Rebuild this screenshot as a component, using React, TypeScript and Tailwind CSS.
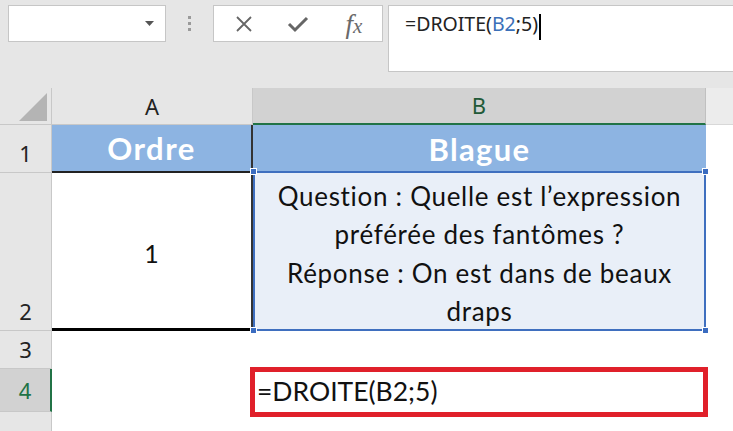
import React from "react";

const ui = { fontFamily: '"Noto Sans", "Open Sans", sans-serif' };
const cell = { fontFamily: 'Lato, "Noto Sans", sans-serif' };

function Handle({ className }: { className: string }) {
  return <div className={`absolute w-[7px] h-[7px] bg-[#3b6cc0] border border-white ${className}`} />;
}

export default function App() {
  return (
    <div className="w-[733px] h-[431px] overflow-hidden bg-white relative" style={ui}>
      {/* Toolbar */}
      <div className="h-[88px] bg-[#e6e6e6] flex items-start pt-[5px]">
        <div className="ml-[8px] w-[158px] h-[37px] bg-white border border-[#c6c6c6] flex items-center justify-end pr-[11px]">
          <svg width="9" height="5" viewBox="0 0 9 5"><path d="M0 0h9L4.5 5z" fill="#555" /></svg>
        </div>
        <div className="w-[47px] h-[37px] flex flex-col items-center justify-center gap-[3px]">
          <div className="w-[3px] h-[3px] bg-[#9a9a9a]" />
          <div className="w-[3px] h-[3px] bg-[#9a9a9a]" />
          <div className="w-[3px] h-[3px] bg-[#9a9a9a]" />
        </div>
        <div className="w-[170px] h-[37px] bg-white border border-[#c6c6c6] flex items-center">
          <div className="w-[56px] flex justify-center pl-[4px]">
            <svg width="18" height="18" viewBox="0 0 18 18"><path d="M2 2L16 16M16 2L2 16" stroke="#666" strokeWidth="1.8" /></svg>
          </div>
          <div className="w-[56px] flex justify-center">
            <svg width="22" height="18" viewBox="0 0 22 18"><path d="M2 9l6 6L20 3" stroke="#666" strokeWidth="3" fill="none" /></svg>
          </div>
          <div className="w-[56px] flex justify-center items-baseline pt-[2px] text-[#6a6a6a] italic" style={{ fontFamily: '"Liberation Serif", serif' }}>
            <span className="text-[27px] leading-none">f</span>
            <span className="text-[21px] leading-none">x</span>
          </div>
        </div>
        <div className="ml-[5px] flex-1 h-[67px] bg-white border border-[#c6c6c6] border-r-0 pl-[16px] pt-[5px]">
          <span className="text-[19.5px] text-[#222] leading-[26px]">
            =DROITE(<span className="text-[#3a6fb8]">B2</span>;5)
          </span>
          <span className="inline-block w-[2px] h-[26px] bg-black align-middle ml-[1px]" />
        </div>
      </div>

      {/* Sheet */}
      <div className="grid grid-cols-[52px_201px_453px_1fr] grid-rows-[37px_48px_158px_38px_43px_1fr] h-[343px]">
        {/* header row */}
        <div className="bg-[#e6e6e6] border-r border-b border-[#c8c8c8] flex items-end justify-end pr-[4px] pb-[3px]">
          <svg width="28" height="28" viewBox="0 0 28 28"><path d="M28 0V28H0z" fill="#b4b4b4" /></svg>
        </div>
        <div className="bg-[#e6e6e6] border-r border-b border-[#c8c8c8] flex items-center justify-center text-[22px] text-[#222]">A</div>
        <div className="bg-[#d2d2d2] border-r border-[#c0c0c0] border-b-2 border-b-[#217346] flex items-center justify-center text-[22px] text-[#225a38]">B</div>
        <div className="bg-[#ececec] border-b border-[#d8d8d8]" />

        {/* row 1 */}
        <div className="bg-[#e6e6e6] border-r border-b border-[#c8c8c8] flex items-end justify-center pb-[2px] text-[22px] text-[#222]">1</div>
        <div className="bg-[#8db4e2] border-r-2 border-r-[#333] border-b-2 border-b-[#222] flex items-center justify-center text-white font-bold text-[31px] tracking-[1.5px]" style={cell}>Ordre</div>
        <div className="bg-[#8db4e2] flex items-center justify-center text-white font-bold text-[31px] tracking-[1.3px]" style={cell}>Blague</div>
        <div />

        {/* row 2 */}
        <div className="bg-[#e6e6e6] border-r border-b border-[#c8c8c8] flex items-end justify-center pb-[2px] text-[22px] text-[#222]">2</div>
        <div className="border-r-2 border-r-[#333] border-b-[3px] border-b-black flex items-center justify-center pt-[7px] text-[25px] text-[#111]" style={cell}>1</div>
        <div className="relative bg-[#e9eff8] border-2 border-[#3f6fbf] -mt-[2px] flex flex-col items-center justify-center pt-[5px] text-[26px] tracking-[0.7px] leading-[38.5px] text-[#111] text-center" style={cell}>
          <div>Question : Quelle est l’expression</div>
          <div>préférée des fantômes ?</div>
          <div>Réponse : On est dans de beaux</div>
          <div>draps</div>
          <Handle className="-left-[5px] -top-[5px]" />
          <Handle className="-right-[5px] -top-[5px]" />
          <Handle className="-left-[5px] -bottom-[5px]" />
          <Handle className="-right-[5px] -bottom-[5px]" />
        </div>
        <div />

        {/* row 3 */}
        <div className="bg-[#e6e6e6] border-r border-b border-[#c8c8c8] flex items-center justify-center text-[22px] text-[#222]">3</div>
        <div />
        <div />
        <div />

        {/* row 4 */}
        <div className="bg-[#d2d2d2] border-r-2 border-r-[#217346] border-b border-b-[#c8c8c8] flex items-center justify-center text-[22px] text-[#217346]">4</div>
        <div />
        <div className="relative">
          <div className="absolute -left-[3px] -top-[2px] w-[458px] h-[50px] border-[5px] border-[#e0202a] flex items-center pl-[2px] text-[26.5px] text-[#111]" style={cell}>
            =DROITE(B2;5)
          </div>
        </div>
        <div />

        {/* row 5 */}
        <div className="bg-[#e6e6e6] border-r border-[#c8c8c8]" />
        <div />
        <div />
        <div />
      </div>
    </div>
  );
}
